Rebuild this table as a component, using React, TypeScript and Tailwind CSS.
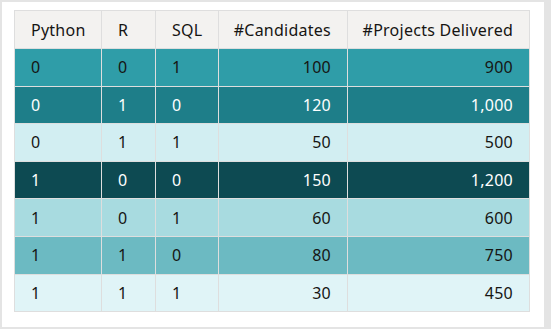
import React from 'react';

type Row = { py: number; r: number; sql: number; cand: string; proj: string; bg: string; fg: string };

const rows: Row[] = [
  { py: 0, r: 0, sql: 1, cand: '100', proj: '900', bg: 'bg-[#2f9da8]', fg: 'text-[#161513]' },
  { py: 0, r: 1, sql: 0, cand: '120', proj: '1,000', bg: 'bg-[#1e7e89]', fg: 'text-white' },
  { py: 0, r: 1, sql: 1, cand: '50', proj: '500', bg: 'bg-[#d2eef2]', fg: 'text-[#161513]' },
  { py: 1, r: 0, sql: 0, cand: '150', proj: '1,200', bg: 'bg-[#0d4a52]', fg: 'text-white' },
  { py: 1, r: 0, sql: 1, cand: '60', proj: '600', bg: 'bg-[#a8dbe0]', fg: 'text-[#161513]' },
  { py: 1, r: 1, sql: 0, cand: '80', proj: '750', bg: 'bg-[#6cbac2]', fg: 'text-[#161513]' },
  { py: 1, r: 1, sql: 1, cand: '30', proj: '450', bg: 'bg-[#e0f4f7]', fg: 'text-[#161513]' },
];

export default function App() {
  return (
    <div className="w-[551px] h-[329px] bg-[#e4e4e4] pt-[2px] pl-[2px] font-['Noto_Sans',sans-serif]">
      <div className="w-[542px] h-[325px] bg-white pt-[8px] pl-[12px]">
        <table className="table-fixed border-collapse w-[515px] text-[16px] tracking-[0.25px] leading-none">
          <colgroup>
            <col className="w-[87px]" />
            <col className="w-[54px]" />
            <col className="w-[63px]" />
            <col className="w-[129px]" />
            <col className="w-[182px]" />
          </colgroup>
          <thead>
            <tr className="bg-[#f3f2f0] text-[#161513] h-[38px]">
              <th className="font-normal text-left pl-4 border border-[#dedede]">Python</th>
              <th className="font-normal text-left pl-4 border border-[#dedede]">R</th>
              <th className="font-normal text-left pl-4 border border-[#dedede]">SQL</th>
              <th className="font-normal text-right pr-4 border border-[#dedede]">#Candidates</th>
              <th className="font-normal text-right pr-4 border border-[#dedede]">#Projects Delivered</th>
            </tr>
          </thead>
          <tbody>
            {rows.map((row, i) => (
              <tr key={i} className={`${row.bg} ${row.fg} h-[37.6px]`}>
                <td className="pl-4 border border-[#dedede]">{row.py}</td>
                <td className="pl-4 border border-[#dedede]">{row.r}</td>
                <td className="pl-4 border border-[#dedede]">{row.sql}</td>
                <td className="text-right pr-4 border border-[#dedede]">{row.cand}</td>
                <td className="text-right pr-4 border border-[#dedede]">{row.proj}</td>
              </tr>
            ))}
          </tbody>
        </table>
      </div>
    </div>
  );
}
